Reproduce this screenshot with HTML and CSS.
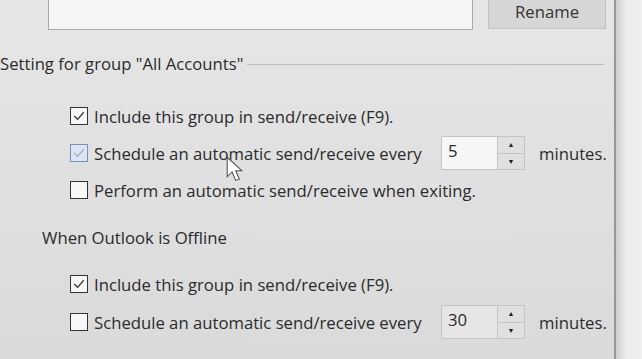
FILE: index.html
```html
<!DOCTYPE html>
<html>
<head>
<meta charset="utf-8">
<link rel="stylesheet" href="styles.css">
</head>
<body>
<div class="screen">
  <div class="panel">
    <div class="toprow">
      <div class="namebox"></div>
      <div class="btn">Rename</div>
    </div>
    <div class="group-head"><span>Setting for group "All Accounts"</span><span class="rule"></span></div>
    <div class="options first">
      <div class="row">
        <span class="cb checked"><svg viewBox="0 0 17 17"><path d="M3.5 8.5 L7 12 L13.5 4.5" /></svg></span>
        <span class="label">Include this group in send/receive (F9).</span>
      </div>
      <div class="row">
        <span class="cb checked hover"><svg viewBox="0 0 17 17"><path d="M3.5 8.5 L7 12 L13.5 4.5" /></svg></span>
        <span class="label fixed">Schedule an automatic send/receive every</span>
        <span class="spin"><span class="val">5</span><span class="arrows"><span class="up">&#9650;</span><span class="down">&#9660;</span></span></span>
        <span class="unit">minutes.</span>
      </div>
      <div class="row">
        <span class="cb"></span>
        <span class="label">Perform an automatic send/receive when exiting.</span>
      </div>
    </div>
    <div class="subhead">When Outlook is Offline</div>
    <div class="options second">
      <div class="row">
        <span class="cb checked"><svg viewBox="0 0 17 17"><path d="M3.5 8.5 L7 12 L13.5 4.5" /></svg></span>
        <span class="label">Include this group in send/receive (F9).</span>
      </div>
      <div class="row">
        <span class="cb"></span>
        <span class="label fixed">Schedule an automatic send/receive every</span>
        <span class="spin"><span class="val">30</span><span class="arrows"><span class="up">&#9650;</span><span class="down">&#9660;</span></span></span>
        <span class="unit">minutes.</span>
      </div>
    </div>
    <svg class="cursor" viewBox="0 0 14 22" width="17" height="27"><path d="M1 1 L1 17 L5 13 L8 20 L11 19 L8 12 L13 12 Z" /></svg>
  </div>
  <div class="divider"></div>
  <div class="side"></div>
</div>
</body>
</html>
```
FILE: styles.css
```css
html, body {
  margin: 0;
  padding: 0;
}
body {
  width: 642px;
  height: 359px;
  overflow: hidden;
  font-family: "Open Sans", "Noto Sans", sans-serif;
  color: #2b2b2b;
}
.screen {
  display: flex;
  width: 642px;
  height: 359px;
}
.panel {
  position: relative;
  width: 614px;
  height: 359px;
  background: linear-gradient(#e6e6e6, #dadada);
  font-size: 16.7px;
}
.divider {
  width: 2px;
  background: #979797;
}
.side {
  flex: 1;
  background: linear-gradient(90deg, #cfcfcf, #ececec 40%, #efefef);
}
.toprow {
  display: flex;
  align-items: flex-start;
  gap: 15px;
  padding-left: 48px;
}
.namebox {
  width: 423px;
  height: 29px;
  background: #f5f5f5;
  border: 1px solid #a9a9a9;
  border-top: none;
}
.btn {
  width: 116px;
  height: 28px;
  background: #d6d6d6;
  border: 1px solid #c2c2c2;
  border-top: none;
  text-align: center;
  line-height: 24px;
  font-size: 16.7px;
  color: #333;
}
.group-head {
  display: flex;
  align-items: center;
  margin-top: 20px;
  height: 26px;
}
.group-head .rule {
  flex: 1;
  margin-right: 10px;
  height: 1px;
  background: #bdbdbd;
  margin-left: 4px;
  margin-top: 2px;
}
.options {
  display: flex;
  flex-direction: column;
  padding-left: 70px;
}
.options.first {
  margin-top: 28px;
  gap: 13px;
}
.options.second {
  margin-top: 22px;
  gap: 14px;
}
.row {
  display: flex;
  align-items: center;
  height: 24px;
}
.cb {
  width: 16px;
  height: 16px;
  border: 1px solid #333;
  background: #f7f7f7;
  margin-right: 6px;
  flex: none;
  box-sizing: content-box;
}
.cb svg {
  display: block;
  width: 16px;
  height: 16px;
}
.cb svg path {
  fill: none;
  stroke: #333;
  stroke-width: 1.3;
}
.cb.hover {
  border-color: #6e93c2;
  background: #dde5ee;
}
.cb.hover svg path {
  stroke: #9db4cc;
}
.label.fixed {
  width: 347px;
}
.spin {
  display: flex;
  height: 34px;
  border: 1px solid #c4c4c4;
  box-sizing: border-box;
}
.val {
  width: 56px;
  background: #f6f6f6;
  padding-left: 6px;
  box-sizing: border-box;
  line-height: 28px;
  border-right: 1px solid #c4c4c4;
}
.second .val {
  background: #e6e6e6;
}
.arrows {
  display: flex;
  flex-direction: column;
  width: 26px;
}
.arrows span {
  flex: 1;
  display: flex;
  align-items: center;
  justify-content: center;
  font-size: 7px;
  color: #222;
  background: #e0e0e0;
}
.arrows .up {
  border-bottom: 1px solid #c4c4c4;
}
.unit {
  margin-left: 14px;
}
.subhead {
  padding-left: 42px;
  margin-top: 24px;
  height: 24px;
  line-height: 24px;
}
.cursor {
  position: absolute;
  left: 226px;
  top: 156px;
}
.cursor path {
  fill: #fff;
  stroke: #555;
  stroke-width: 0.9;
}
```
